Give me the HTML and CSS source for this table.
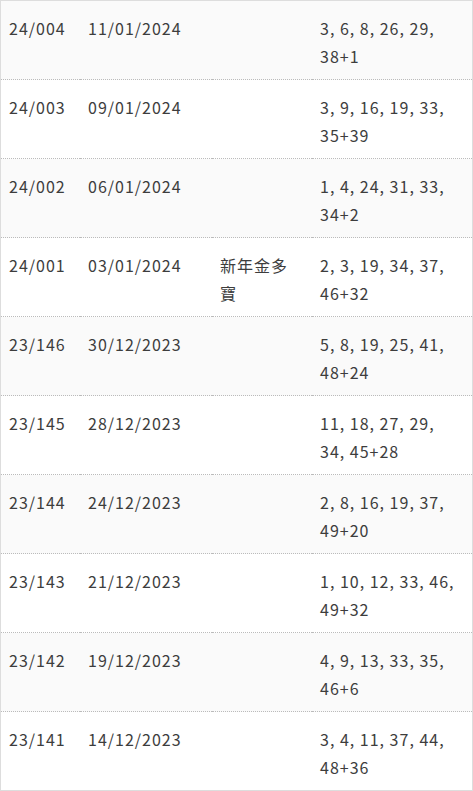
FILE: index.html
```html
<!DOCTYPE html>
<html lang="zh-Hant">
<head>
<meta charset="utf-8">
<link rel="stylesheet" href="styles.css">
</head>
<body>
<table class="results">
  <colgroup>
    <col class="c-draw">
    <col class="c-date">
    <col class="c-note">
    <col class="c-nums">
  </colgroup>
  <tbody>
    <tr><td>24/004</td><td>11/01/2024</td><td></td><td>3, 6, 8, 26, 29, 38+1</td></tr>
    <tr><td>24/003</td><td>09/01/2024</td><td></td><td>3, 9, 16, 19, 33, 35+39</td></tr>
    <tr><td>24/002</td><td>06/01/2024</td><td></td><td>1, 4, 24, 31, 33, 34+2</td></tr>
    <tr><td>24/001</td><td>03/01/2024</td><td>新年金多寶</td><td>2, 3, 19, 34, 37, 46+32</td></tr>
    <tr><td>23/146</td><td>30/12/2023</td><td></td><td>5, 8, 19, 25, 41, 48+24</td></tr>
    <tr><td>23/145</td><td>28/12/2023</td><td></td><td>11, 18, 27, 29, 34, 45+28</td></tr>
    <tr><td>23/144</td><td>24/12/2023</td><td></td><td>2, 8, 16, 19, 37, 49+20</td></tr>
    <tr><td>23/143</td><td>21/12/2023</td><td></td><td>1, 10, 12, 33, 46, 49+32</td></tr>
    <tr><td>23/142</td><td>19/12/2023</td><td></td><td>4, 9, 13, 33, 35, 46+6</td></tr>
    <tr><td>23/141</td><td>14/12/2023</td><td></td><td>3, 4, 11, 37, 44, 48+36</td></tr>
  </tbody>
</table>
</body>
</html>
```
FILE: styles.css
```css
html, body {
  margin: 0;
  padding: 0;
  background: #fff;
}
.results {
  width: 473px;
  table-layout: fixed;
  border-collapse: separate;
  border-spacing: 0;
  border: 1px solid #ddd;
  font-family: "Noto Sans CJK TC", "Noto Sans", sans-serif;
  font-size: 16px;
  letter-spacing: 1px;
  line-height: 28px;
  color: #3d3d3d;
}
.c-draw { width: 79px; }
.c-date { width: 132px; }
.c-note { width: 100px; }
.c-nums { width: 160px; }
.results td {
  padding: 13px 12px 9px 8px;
  vertical-align: top;
  border-bottom: 1px dotted #bbb;
}
.results tr:last-child td {
  border-bottom: none;
}
.results tr:nth-child(odd) td {
  background: #fafafa;
}
```
